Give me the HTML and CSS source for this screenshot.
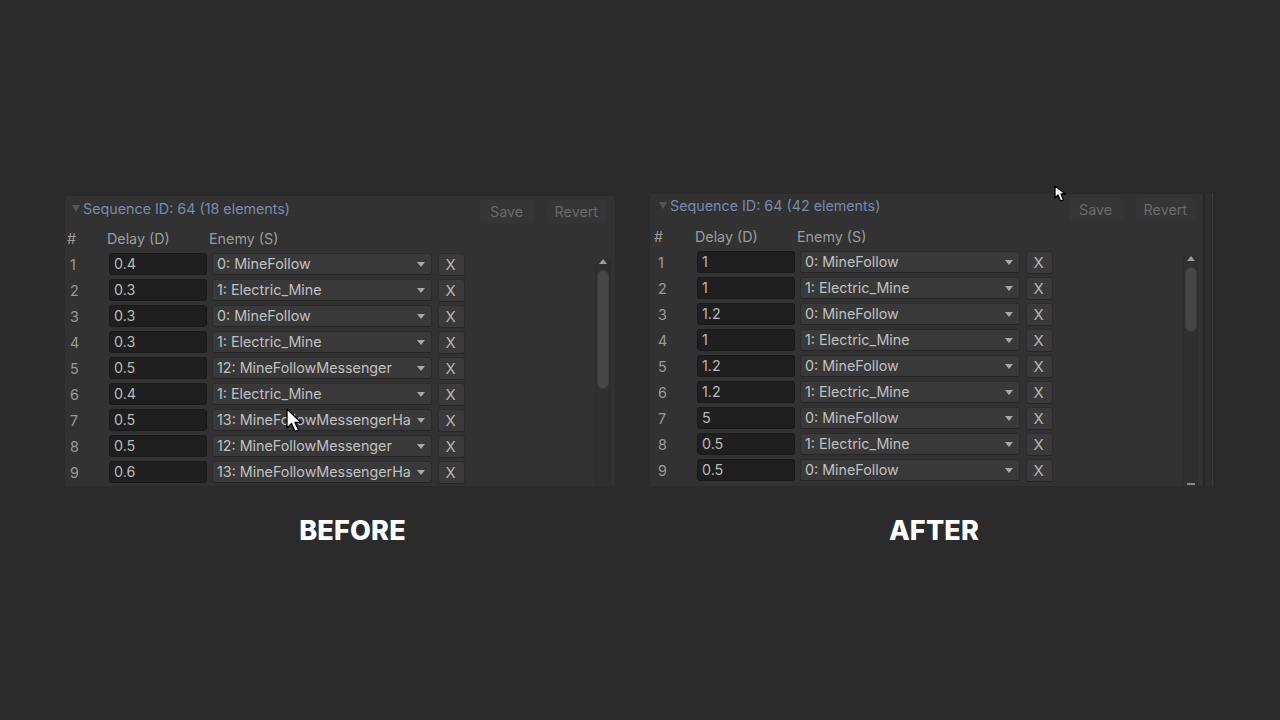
FILE: index.html
```html
<!DOCTYPE html>
<html>
<head>
<meta charset="utf-8">
<link rel="stylesheet" href="styles.css">
</head>
<body>
<main class="stage">
  <section class="col col-before">
    <div class="panel">
      <div class="panel-head">
        <span class="fold"></span>
        <span class="title">Sequence ID: 64 (18 elements)</span>
        <span class="btns"><span class="btn">Save</span><span class="btn">Revert</span></span>
      </div>
      <div class="panel-body">
        <div class="list">
          <div class="cols"><span class="c-num">#</span><span class="c-delay">Delay (D)</span><span>Enemy (S)</span></div>
          <div class="row"><span class="num">1</span><span class="field">0.4</span><span class="drop"><span class="dtext">0: MineFollow</span><span class="caret"></span></span><span class="x">X</span></div>
          <div class="row"><span class="num">2</span><span class="field">0.3</span><span class="drop"><span class="dtext">1: Electric_Mine</span><span class="caret"></span></span><span class="x">X</span></div>
          <div class="row"><span class="num">3</span><span class="field">0.3</span><span class="drop"><span class="dtext">0: MineFollow</span><span class="caret"></span></span><span class="x">X</span></div>
          <div class="row"><span class="num">4</span><span class="field">0.3</span><span class="drop"><span class="dtext">1: Electric_Mine</span><span class="caret"></span></span><span class="x">X</span></div>
          <div class="row"><span class="num">5</span><span class="field">0.5</span><span class="drop"><span class="dtext">12: MineFollowMessenger</span><span class="caret"></span></span><span class="x">X</span></div>
          <div class="row"><span class="num">6</span><span class="field">0.4</span><span class="drop"><span class="dtext">1: Electric_Mine</span><span class="caret"></span></span><span class="x">X</span></div>
          <div class="row"><span class="num">7</span><span class="field">0.5</span><span class="drop"><span class="dtext">13: MineFollowMessengerHa</span><span class="caret"></span></span><span class="x">X</span></div>
          <div class="row"><span class="num">8</span><span class="field">0.5</span><span class="drop"><span class="dtext">12: MineFollowMessenger</span><span class="caret"></span></span><span class="x">X</span></div>
          <div class="row"><span class="num">9</span><span class="field">0.6</span><span class="drop"><span class="dtext">13: MineFollowMessengerHa</span><span class="caret"></span></span><span class="x">X</span></div>
        </div>
        <div class="scroll scroll-before">
          <span class="arrow-up"></span>
          <span class="thumb"></span>
        </div>
      </div>
      <svg class="cursor cursor-main" width="18" height="26" viewBox="0 0 18 26"><path d="M1 1 L1 20 L5.5 15.5 L9 23.5 L12.5 22 L9 14.5 L15 14.5 Z" fill="#fff" stroke="#000" stroke-width="1.3" stroke-linejoin="round"/></svg>
    </div>
    <div class="label">BEFORE</div>
  </section>

  <section class="col col-after">
    <div class="panel-wrap">
      <div class="panel panel-after">
        <div class="panel-head">
          <span class="fold"></span>
          <span class="title">Sequence ID: 64 (42 elements)</span>
          <span class="btns"><span class="btn">Save</span><span class="btn">Revert</span></span>
        </div>
        <div class="panel-body">
          <div class="list">
            <div class="cols"><span class="c-num">#</span><span class="c-delay">Delay (D)</span><span>Enemy (S)</span></div>
            <div class="row"><span class="num">1</span><span class="field">1</span><span class="drop"><span class="dtext">0: MineFollow</span><span class="caret"></span></span><span class="x">X</span></div>
            <div class="row"><span class="num">2</span><span class="field">1</span><span class="drop"><span class="dtext">1: Electric_Mine</span><span class="caret"></span></span><span class="x">X</span></div>
            <div class="row"><span class="num">3</span><span class="field">1.2</span><span class="drop"><span class="dtext">0: MineFollow</span><span class="caret"></span></span><span class="x">X</span></div>
            <div class="row"><span class="num">4</span><span class="field">1</span><span class="drop"><span class="dtext">1: Electric_Mine</span><span class="caret"></span></span><span class="x">X</span></div>
            <div class="row"><span class="num">5</span><span class="field">1.2</span><span class="drop"><span class="dtext">0: MineFollow</span><span class="caret"></span></span><span class="x">X</span></div>
            <div class="row"><span class="num">6</span><span class="field">1.2</span><span class="drop"><span class="dtext">1: Electric_Mine</span><span class="caret"></span></span><span class="x">X</span></div>
            <div class="row"><span class="num">7</span><span class="field">5</span><span class="drop"><span class="dtext">0: MineFollow</span><span class="caret"></span></span><span class="x">X</span></div>
            <div class="row"><span class="num">8</span><span class="field">0.5</span><span class="drop"><span class="dtext">1: Electric_Mine</span><span class="caret"></span></span><span class="x">X</span></div>
            <div class="row"><span class="num">9</span><span class="field">0.5</span><span class="drop"><span class="dtext">0: MineFollow</span><span class="caret"></span></span><span class="x">X</span></div>
          </div>
          <div class="scroll scroll-after">
            <span class="arrow-up"></span>
            <span class="thumb"></span>
            <span class="arrow-down"></span>
          </div>
        </div>
      </div>
      <div class="edge"></div>
    </div>
    <svg class="cursor cursor-top" width="16" height="18" viewBox="0 0 16 18"><path d="M1 1 L1 13 L4 10 L6.5 16 L9.5 15 L7 9 L11.5 9 Z" fill="#fff" stroke="#000" stroke-width="1.3" stroke-linejoin="round"/></svg>
    <div class="label">AFTER</div>
  </section>
</main>
</body>
</html>
```

FILE: styles.css
```css
* { box-sizing: border-box; }

html, body {
  margin: 0;
  padding: 0;
  background: #2b2b2b;
}

body {
  width: 1280px;
  height: 720px;
  overflow: hidden;
  font-family: Inter, "Liberation Sans", sans-serif;
}

.stage {
  display: flex;
  padding: 193px 0 0 65px;
  gap: 10px;
}

.col {
  position: relative;
  display: flex;
  flex-direction: column;
  align-items: flex-start;
}

.col-before {
  width: 575px;
  padding-top: 2px;
}

.col-after {
  width: 568px;
}

.panel {
  position: relative;
  width: 550px;
  height: 291px;
  background: #323232;
  border-top: 1px solid #2a2a2a;
  overflow: hidden;
  display: flex;
  flex-direction: column;
}

.panel-wrap {
  display: flex;
  align-items: stretch;
}

.panel-after {
  width: 553px;
  height: 293px;
}

.edge {
  width: 15px;
  border-left: 2px solid #252525;
  background: linear-gradient(to right, #2e2e2e 0, #2e2e2e 7px, #3a3a3a 7px, #3a3a3a 8px, #2a2a2a 8px);
}

.panel-head {
  height: 29px;
  flex: none;
  display: flex;
  align-items: center;
  padding: 0 8px 0 7px;
}

.panel-after .panel-head {
  height: 29px;
  padding-left: 9px;
  padding-right: 7px;
}

.fold {
  width: 0;
  height: 0;
  border-left: 4px solid transparent;
  border-right: 4px solid transparent;
  border-top: 7px solid #555;
  margin-right: 3px;
  margin-top: -4px;
}

.title {
  font-size: 14.3px;
  color: #7c87b0;
  margin-top: -4px;
}

.panel-after .title,
.panel-after .fold {
  margin-top: -6px;
}

.btns {
  margin-left: auto;
  display: flex;
  gap: 12px;
  margin-top: 1px;
}

.btn {
  display: inline-block;
  background: #353535;
  color: #6a6a6a;
  font-size: 14.3px;
  padding: 3px 9px 3px 8px;
  border-radius: 2px;
  min-width: 55px;
  text-align: center;
}

.panel-body {
  flex: 1;
  display: flex;
  min-height: 0;
}

.list {
  flex: 1;
  padding-left: 0;
}

.panel-after .list {
  padding-left: 3px;
}

.cols {
  height: 26px;
  display: flex;
  align-items: center;
  font-size: 14.3px;
  color: #9c9c9c;
}

.c-num {
  width: 42px;
  padding-left: 2px;
}

.panel-after .c-num { padding-left: 1px; }

.c-delay {
  width: 102px;
}

.row {
  height: 26px;
  display: flex;
  align-items: center;
  font-size: 14.3px;
}

.num {
  width: 44px;
  padding-left: 5px;
  color: #9a9a9a;
}

.field {
  width: 98px;
  height: 22px;
  background: #1f1f1f;
  border: 1px solid #191919;
  border-radius: 3px;
  color: #b9b9b9;
  padding-left: 4px;
  line-height: 20px;
}

.drop {
  width: 220px;
  height: 22px;
  margin-left: 5px;
  background: #393939;
  border: 1px solid #2b2b2b;
  border-bottom-color: #252525;
  border-radius: 3px;
  display: flex;
  align-items: center;
  padding: 0 6px 0 4px;
  color: #c0c0c0;
}

.dtext {
  flex: 1;
  overflow: hidden;
  white-space: nowrap;
  line-height: 20px;
}

.caret {
  flex: none;
  width: 0;
  height: 0;
  border-left: 4.5px solid transparent;
  border-right: 4.5px solid transparent;
  border-top: 5px solid #a8a8a8;
  margin-left: 1px;
}

.x {
  width: 27px;
  height: 23px;
  margin-left: 6px;
  background: #3a3a3a;
  border: 1px solid #2c2c2c;
  border-bottom-color: #262626;
  border-radius: 3px;
  color: #b4b4b4;
  font-size: 15px;
  text-align: center;
  line-height: 21px;
  padding-right: 2px;
}

.scroll {
  width: 16px;
  margin-right: 3px;
  display: flex;
  flex-direction: column;
  align-items: center;
  background: linear-gradient(to right, #303030 0, #2e2e2e 100%);
  border-left: 1px solid #2d2d2d;
  border-right: 1px solid #2d2d2d;
}

.scroll-before {
  margin-top: 34px;
  margin-right: 4px;
}

.scroll-after {
  margin-top: 33px;
  margin-right: 5px;
  width: 15px;
}

.arrow-up {
  width: 0;
  height: 0;
  border-left: 4px solid transparent;
  border-right: 4px solid transparent;
  border-bottom: 5px solid #9c9c9c;
}

.arrow-down {
  margin-top: auto;
  width: 8px;
  height: 2px;
  background: #8a8a8a;
  margin-bottom: 1px;
}

.thumb {
  width: 12px;
  background: #464646;
  border: 1px solid #3c3c3c;
  border-radius: 6px;
  margin-top: 6px;
}

.scroll-before .thumb { height: 119px; }
.scroll-after .thumb { height: 65px; }

.cursor {
  position: absolute;
}

.cursor-main {
  left: 221px;
  top: 212px;
}

.cursor-top {
  left: 404px;
  top: -8px;
}

.label {
  align-self: center;
  margin-top: 28px;
  font-family: Inter, "Liberation Sans", sans-serif;
  font-weight: 800;
  font-size: 27px;
  line-height: 34px;
  color: #ffffff;
  letter-spacing: 0.2px;
}
```
